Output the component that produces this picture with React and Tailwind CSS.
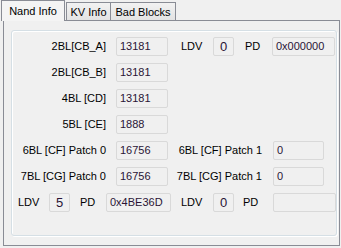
import React from "react";

function Box({ w, value = "", center = false }) {
  return (
    <div
      className={`h-[19px] ${w} shrink-0 border border-[#d9d9d9] rounded-[2px] bg-[#f0f0f0] text-[#2a1436] leading-[17px] ${
        center ? "text-center text-[13px]" : "pl-[3px]"
      }`}
    >
      {value}
    </div>
  );
}

function Label({ w, ml = "", right = false, children }) {
  return (
    <span className={`${w} ${ml} shrink-0 ${right ? "text-right pr-[1px]" : ""} whitespace-nowrap`}>
      {children}
    </span>
  );
}

export default function App() {
  const simple = [
    ["2BL[CB_B]", "13181"],
    ["4BL [CD]", "13181"],
    ["5BL [CE]", "1888"],
  ];
  return (
    <div className="w-[341px] h-[248px] bg-[#f0f0f0] text-[11px] text-black font-['Liberation_Sans',Arial,sans-serif] overflow-hidden">
      {/* tab strip */}
      <div className="flex items-end h-[20px] pl-[1px]">
        <div className="relative z-10 h-[21px] w-[64px] -mb-px border border-b-0 border-[#898c95] bg-[#f4f4f4] text-center leading-[20px]">
          Nand Info
        </div>
        <div className="h-[18px] w-[45px] ml-[1px] border border-b-0 border-[#898c95] bg-gradient-to-b from-[#f2f2f2] to-[#e3e3e3] text-center leading-[18px]">
          KV Info
        </div>
        <div className="h-[18px] w-[66px] -ml-px border border-b-0 border-[#898c95] bg-gradient-to-b from-[#f2f2f2] to-[#e3e3e3] text-center leading-[18px]">
          Bad Blocks
        </div>
      </div>

      {/* tab page */}
      <div className="ml-[3px] w-[337px] h-[226px] border border-[#898c95] bg-[#f0f0f0] pt-[9px] pl-[7px]">
        <div className="w-[326px] h-[206px] rounded-[3px] border border-[#d5dfe5] shadow-[inset_1px_1px_0_#ffffff,1px_1px_0_#ffffff] pt-[6px] flex flex-col gap-[7px]">
          {/* row 1 */}
          <div className="flex items-center h-[19px]">
            <Label w="w-[95px]" right>
              2BL[CB_A]
            </Label>
            <span className="ml-[9px]" />
            <Box w="w-[52px]" value="13181" />
            <Label w="w-[32px]" ml="ml-[13px]">
              LDV
            </Label>
            <Box w="w-[21px]" value="0" center />
            <Label w="w-[27px]" ml="ml-[11px]">
              PD
            </Label>
            <Box w="w-[63px]" value="0x000000" />
          </div>

          {simple.map(([l, v]) => (
            <div key={l} className="flex items-center h-[19px]">
              <Label w="w-[95px]" right>
                {l}
              </Label>
              <span className="ml-[9px]" />
              <Box w="w-[52px]" value={v} />
            </div>
          ))}

          {[
            ["6BL [CF] Patch 0", "6BL [CF] Patch 1"],
            ["7BL [CG] Patch 0", "7BL [CG] Patch 1"],
          ].map(([a, b]) => (
            <div key={a} className="flex items-center h-[19px]">
              <Label w="w-[95px]" right>
                {a}
              </Label>
              <span className="ml-[9px]" />
              <Box w="w-[52px]" value="16756" />
              <Label w="w-[95px]" right>
                {b}
              </Label>
              <span className="ml-[10px]" />
              <Box w="w-[51px]" value="0" />
            </div>
          ))}

          {/* row 7 */}
          <div className="flex items-center h-[19px]">
            <Label w="w-[31px]" ml="ml-[6px]">
              LDV
            </Label>
            <Box w="w-[21px]" value="5" center />
            <Label w="w-[26px]" ml="ml-[10px]">
              PD
            </Label>
            <Box w="w-[65px]" value="0x4BE36D" />
            <Label w="w-[32px]" ml="ml-[10px]">
              LDV
            </Label>
            <Box w="w-[21px]" value="0" center />
            <Label w="w-[30px]" ml="ml-[9px]">
              PD
            </Label>
            <Box w="w-[63px]" value="" />
          </div>
        </div>
      </div>
    </div>
  );
}
